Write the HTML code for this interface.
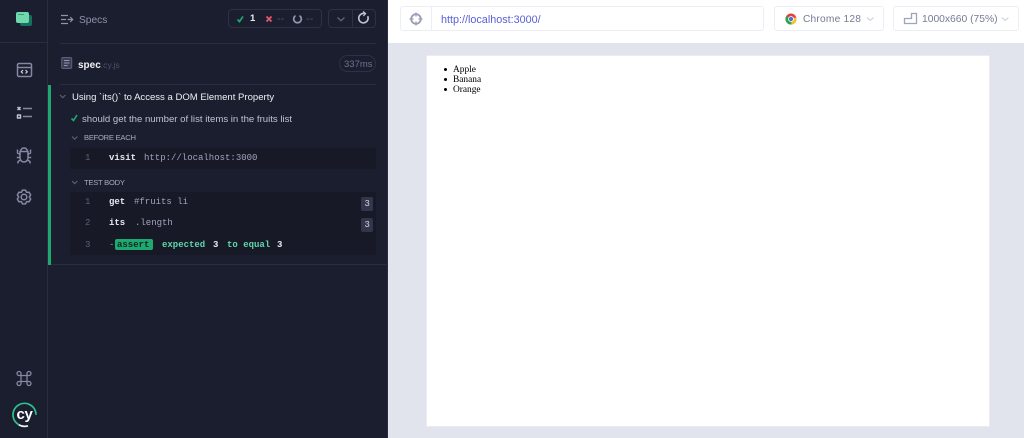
<!DOCTYPE html>
<html><head><meta charset="utf-8">
<style>
html,body{margin:0;padding:0;width:1024px;height:438px;overflow:hidden;background:#e1e3ed}
body{position:relative;font-family:"Liberation Sans",sans-serif}
.a{position:absolute}
.t{position:absolute;white-space:nowrap;line-height:12px}
.m{font-family:"Liberation Mono",monospace;font-size:9px;position:absolute;white-space:nowrap;line-height:12px}
svg{position:absolute;overflow:visible}
.box{position:absolute;background:#fff;border:1px solid #eceef5;border-radius:3px;box-sizing:border-box}
</style></head><body>
<!-- sidebar -->
<div class="a" style="left:0;top:0;width:48px;height:438px;background:#1b1e2e"></div>
<div class="a" style="left:47px;top:0;width:1px;height:438px;background:#2a2d3f"></div>
<div class="a" style="left:0;top:42px;width:47px;height:1px;background:#2a2d3f"></div>
<!-- logo -->
<div class="a" style="left:20px;top:15px;width:12px;height:11px;background:#17705f;border-radius:2px"></div>
<div class="a" style="left:16px;top:12px;width:13px;height:11px;background:#6fd8ac;border-radius:2px"></div>
<div class="a" style="left:18px;top:14px;width:6px;height:1px;background:#3f9c7e"></div>
<!-- sidebar icons -->
<svg style="left:0;top:0" width="48" height="438" fill="none" stroke="#8488a2" stroke-width="1.500" stroke-linejoin="round">
<rect x="17.500" y="63.500" width="14" height="13" rx="1.500"/><path d="M17.500 67.500H31.500"/>
<path d="M23 70L21.200 71.800L23 73.500M25.500 70L27.300 71.800L25.500 73.500" stroke-width="1.200" stroke="#d0d3df"/>
<path d="M17.500 107l3 3M20.500 107l-3 3" stroke="#c0c3d4"/><path d="M23 108.500H32"/>
<rect x="17.500" y="115" width="3" height="3" stroke="#c0c3d4"/><path d="M23 116.500H32"/>
<path d="M20.500 151.500a3.500 3.500 0 0 1 7 0M20 151.500h8v6.500a4 4 0 0 1-8 0zM20 154.500l-2.500-1.500V149.500M28 154.500l2.500-1.500V149.500M20 157.500h-3.200M28 157.500h3.200M20.500 160l-2.500 1.500V163.500M27.500 160l2.500 1.500V163.500"/>
<circle cx="24" cy="197" r="2.800"/>
<path d="M22.430 190.180L25.570 190.180L26.650 192.410L29.120 192.230L30.690 194.950L29.300 197L30.690 199.050L29.120 201.770L26.650 201.590L25.570 203.820L22.430 203.820L21.350 201.590L18.880 201.770L17.310 199.050L18.700 197L17.310 194.950L18.880 192.230L21.350 192.410Z"/>
<path d="M21 375.500h6v6h-6zM21 375.500v-2a2 2 0 1 0-2 2h2zM27 375.500v-2a2 2 0 1 1 2 2h-2zM21 381.500v2a2 2 0 1 1-2-2h2zM27 381.500v2a2 2 0 1 0 2-2h-2z" stroke-width="1.300"/>
</svg>
<svg style="left:0;top:0" width="48" height="438" fill="none">
<path d="M18.750 424.760A11.500 11.500 0 1 1 36 414.800" stroke="#2bc48e" stroke-width="1.700"/>
<path d="M18.750 424.760A11.500 11.500 0 0 0 28 425.800" stroke="#e8f5ef" stroke-width="1.700"/>
</svg>
<div class="t" style="left:16.500px;top:408px;font-size:15px;font-weight:bold;line-height:14px;color:#fff;letter-spacing:-.4px">cy</div>
<!-- reporter -->
<div class="a" style="left:48px;top:0;width:340px;height:438px;background:#1b1e2e"></div>
<div class="a" style="left:387px;top:0;width:1px;height:438px;background:#2a2d3f"></div>
<svg style="left:0;top:0" width="100" height="40" fill="none" stroke="#8f93ac" stroke-width="1.200">
<path d="M61 15.500h7M61 19.500h5M61 23.500h7M67.500 19.500h5M70.200 17l2.500 2.500-2.500 2.500"/>
</svg>
<div class="t" style="left:79px;top:15px;font-size:10.200px;color:#8f93ac">Specs</div>
<div class="a" style="left:60px;top:43px;width:316px;height:1px;background:#2a2d3f"></div>
<div class="a" style="left:228px;top:9px;width:94px;height:19px;border:1px solid #2e3146;border-radius:4px;box-sizing:border-box"></div>
<div class="a" style="left:328px;top:9px;width:48px;height:19px;border:1px solid #2e3146;border-radius:4px;box-sizing:border-box"></div>
<div class="a" style="left:352px;top:10px;width:1px;height:17px;background:#2e3146"></div>
<svg style="left:0;top:0" width="388" height="44" fill="none">
<path d="M237.500 19.500l2 2 3.500-5" stroke="#1fa971" stroke-width="1.700"/>
<path d="M266.500 16.500l5 5M271.500 16.500l-5 5" stroke="#e45770" stroke-width="1.800"/>
<path d="M295.500 15.700a3.800 3.800 0 1 0 4 0" stroke="#9296ad" stroke-width="1.700"/>
<path d="M337.500 17.500l3.500 3.200 3.500-3.200" stroke="#5c607a" stroke-width="1.400"/>
<path d="M367.700 16.200a4.700 4.700 0 1 1-3.200-2.600" stroke="#c0c3d2" stroke-width="1.600"/>
<path d="M363 11.500l2.500 2-2 2.500" stroke="#c0c3d2" stroke-width="1.300"/>
</svg>
<div class="t" style="left:250px;top:13px;font-size:9.500px;font-weight:bold;color:#e8eaf2">1</div>
<div class="t" style="left:277px;top:13px;font-size:11px;color:#4e5269">--</div>
<div class="t" style="left:306px;top:13px;font-size:11px;color:#4e5269">--</div>
<!-- spec row -->
<svg style="left:61px;top:57px" width="12" height="13" fill="none">
<rect x=".7" y=".5" width="10" height="11" rx="1.500" fill="#3a3e56" stroke="#5c607a"/>
<path d="M3 3.500H8.500M3 6H8.500M3 8.500H6.500" stroke="#8f93ac"/>
</svg>
<div class="t" style="left:78px;top:59px;font-size:10px;font-weight:bold;color:#f0f1f6">spec<span style="font-weight:normal;font-size:8.600px;color:#4e5269">.cy.js</span></div>
<div class="a" style="left:339px;top:55px;width:37px;height:17px;border:1px solid #2e3146;border-radius:9px;box-sizing:border-box"></div>
<div class="t" style="left:344px;top:59px;font-size:9.500px;color:#6f7390">337ms</div>
<div class="a" style="left:60px;top:84px;width:316px;height:1px;background:#2a2d3f"></div>
<!-- test -->
<div class="a" style="left:48px;top:85px;width:3px;height:180px;background:#1fa971"></div>
<div class="a" style="left:51px;top:264px;width:336px;height:1px;background:#2a2d3f"></div>
<svg style="left:0;top:0" width="388" height="200" fill="none">
<path d="M60 95l2.700 2.700 2.700-2.700" stroke="#5c607a" stroke-width="1.100"/>
<path d="M71.500 118.500l2 2 3.500-5.500" stroke="#1fa971" stroke-width="1.600"/>
<path d="M72 136.500l2.700 2.700 2.700-2.700" stroke="#5c607a" stroke-width="1.100"/>
<path d="M72 181l2.700 2.700 2.700-2.700" stroke="#5c607a" stroke-width="1.100"/>
</svg>
<div class="t" style="left:72px;top:92px;font-size:9.550px;color:#eef0f6">Using `its()` to Access a DOM Element Property</div>
<div class="t" style="left:82px;top:114px;font-size:9.600px;color:#c0c3d4">should get the number of list items in the fruits list</div>
<div class="t" style="left:84px;top:132px;font-size:7.600px;letter-spacing:-.25px;color:#a8abc0">BEFORE EACH</div>
<div class="a" style="left:70px;top:148px;width:306px;height:21px;background:#171926"></div>
<div class="m" style="left:85px;top:152px;color:#5c607a">1</div>
<div class="m" style="left:109px;top:152px;color:#e8eaf2;font-weight:bold">visit</div>
<div class="m" style="left:144px;top:152px;color:#a0a4bb">http://localhost:3000</div>
<div class="t" style="left:84px;top:176.500px;font-size:7.600px;letter-spacing:-.25px;color:#a8abc0">TEST BODY</div>
<div class="a" style="left:70px;top:192px;width:306px;height:63px;background:#171926"></div>
<div class="m" style="left:85px;top:196px;color:#5c607a">1</div>
<div class="m" style="left:109px;top:196px;color:#e8eaf2;font-weight:bold">get</div>
<div class="m" style="left:134px;top:196px;color:#a0a4bb">#fruits li</div>
<div class="m" style="left:85px;top:217px;color:#5c607a">2</div>
<div class="m" style="left:109px;top:217px;color:#e8eaf2;font-weight:bold">its</div>
<div class="m" style="left:135px;top:217px;color:#a0a4bb">.length</div>
<div class="m" style="left:85px;top:239px;color:#5c607a">3</div>
<div class="m" style="left:109px;top:239px;color:#3fbf8f">-</div>
<div class="a" style="left:115px;top:239px;width:38px;height:11px;background:#1fa971;border-radius:2px"></div>
<div class="m" style="left:117px;top:238.500px;color:#0c2a22;font-weight:bold">assert</div>
<div class="m" style="left:162px;top:239px;color:#5fd8ac;font-weight:bold">expected</div>
<div class="m" style="left:213px;top:239px;color:#e8eaf2;font-weight:bold">3</div>
<div class="m" style="left:227px;top:239px;color:#5fd8ac;font-weight:bold">to equal</div>
<div class="m" style="left:277px;top:239px;color:#e8eaf2;font-weight:bold">3</div>
<div class="a" style="left:361px;top:197px;width:12px;height:14px;background:#33364a;border-radius:2px"></div>
<div class="m" style="left:364.500px;top:197.500px;color:#d5d7e3">3</div>
<div class="a" style="left:361px;top:218px;width:12px;height:14px;background:#33364a;border-radius:2px"></div>
<div class="m" style="left:364.500px;top:218.500px;color:#d5d7e3">3</div>
<!-- browser header -->
<div class="a" style="left:388px;top:0;width:636px;height:43px;background:#fff"></div>
<div class="box" style="left:400px;top:6px;width:364px;height:25px"></div>
<div class="a" style="left:431px;top:7px;width:1px;height:23px;background:#eceef5"></div>
<div class="box" style="left:774px;top:6px;width:110px;height:25px"></div>
<div class="box" style="left:893px;top:6px;width:126px;height:25px"></div>
<svg style="left:0;top:0" width="1024" height="43" fill="none">
<circle cx="416" cy="19" r="4.800" stroke="#9a9eb6" stroke-width="1.800"/>
<path d="M416 12.500V16.500M416 21.500V25.500M409.500 19H413.500M418.500 19H422.500" stroke="#9a9eb6" stroke-width="1.300"/>
<circle cx="791" cy="19" r="5.500" fill="#e0443a"/>
<path d="M791 19L796.200 17.200A5.500 5.500 0 0 1 791 24.500Z" fill="#f6c12d"/>
<path d="M791 19L791.500 24.500A5.500 5.500 0 0 1 786.200 16.200Z" fill="#2fa44f"/>
<circle cx="791" cy="19" r="2.500" fill="#3d78e0" stroke="#fff" stroke-width=".8"/>
<path d="M867 17.500l3.200 3 3.200-3" stroke="#c9ccd9" stroke-width="1"/>
<path d="M904.500 23.500H916.500V13.500H911.500V18.500H904.500Z" stroke="#a0a4bb" stroke-width="1.300"/>
<path d="M1002 17.500l3.200 3 3.200-3" stroke="#c9ccd9" stroke-width="1"/>
</svg>
<div class="t" style="left:441px;top:14px;font-size:10.800px;color:#5a5fd8">http://localhost:3000/</div>
<div class="t" style="left:803px;top:14px;font-size:10.200px;color:#777b94;letter-spacing:.2px">Chrome 128</div>
<div class="t" style="left:922px;top:14px;font-size:10.300px;color:#777b94">1000x660 (75%)</div>
<!-- AUT -->
<div class="a" style="left:426px;top:55px;width:564px;height:372px;background:#fff;box-shadow:0 0 0 1px #eceaf4 inset"></div>
<div class="a" style="left:427px;top:56px;width:562px;height:370px;background:#fff"></div>
<div class="a" style="left:444px;top:67.500px;width:3px;height:3px;border-radius:50%;background:#000"></div>
<div class="a" style="left:444px;top:77.500px;width:3px;height:3px;border-radius:50%;background:#000"></div>
<div class="a" style="left:444px;top:87.500px;width:3px;height:3px;border-radius:50%;background:#000"></div>
<div class="t" style="left:453px;top:65px;font-family:'Liberation Serif',serif;font-size:9.400px;line-height:10px;color:#000">Apple</div>
<div class="t" style="left:453px;top:75px;font-family:'Liberation Serif',serif;font-size:9.400px;line-height:10px;color:#000">Banana</div>
<div class="t" style="left:453px;top:85px;font-family:'Liberation Serif',serif;font-size:9.400px;line-height:10px;color:#000">Orange</div>
</body></html>
